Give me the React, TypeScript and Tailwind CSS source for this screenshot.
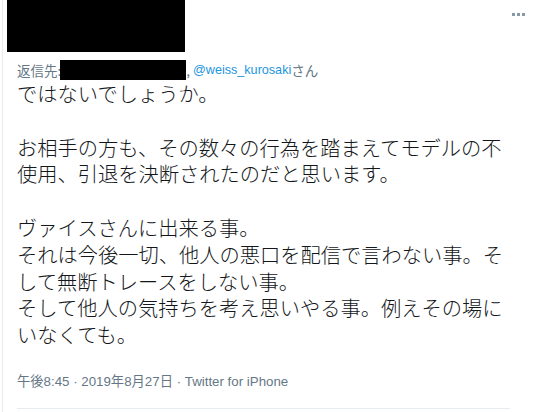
import React from 'react'

const jp = '"Noto Sans CJK JP", "Noto Sans", sans-serif'
const ui = '"Liberation Sans", "Noto Sans CJK JP", sans-serif'

export default function App() {
  return (
    <div className="w-[541px] h-[412px] bg-white overflow-hidden">
      <div className="ml-[2px] h-full border-l border-[#e6ecf0] relative" style={{ fontFamily: ui }}>
        {/* more menu */}
        <div className="absolute right-[16px] top-[13px] flex gap-[2px]">
          <span className="w-[3px] h-[3px] bg-[#8899a6]" />
          <span className="w-[3px] h-[3px] bg-[#8899a6]" />
          <span className="w-[3px] h-[3px] bg-[#8899a6]" />
        </div>

        {/* redacted name block */}
        <div className="ml-[4px] w-[178px] h-[52px] bg-black" />

        {/* reply to */}
        <div className="mt-[8px] ml-[14px] flex items-center h-[20px] text-[13.5px] text-[#657786]" style={{ fontFamily: jp }}>
          <span>返信先:</span>
          <span className="w-[126px] h-[20px] bg-black -ml-[1px]" />
          <span>,&nbsp;</span>
          <span className="text-[#1b95e0] text-[12.6px]" style={{ fontFamily: ui }}>@weiss_kurosaki</span>
          <span>さん</span>
        </div>

        {/* tweet text */}
        <div
          className="ml-[14px] mt-[1px] text-[20.25px] leading-[26.8px] font-light text-[#14171a] whitespace-pre-wrap"
          style={{ fontFamily: jp }}
        >
          {`ではないでしょうか。

お相手の方も、その数々の行為を踏まえてモデルの不
使用、引退を決断されたのだと思います。

ヴァイスさんに出来る事。
それは今後一切、他人の悪口を配信で言わない事。そ
して無断トレースをしない事。
そして他人の気持ちを考え思いやる事。例えその場に
いなくても。`}
        </div>

        {/* meta */}
        <div className="ml-[14px] mt-[23px] text-[13.3px] text-[#657786]">
          午後8:45 · 2019年8月27日 · Twitter for iPhone
        </div>

        <div className="ml-[14px] mr-[31px] mt-[16px] border-b border-[#e6ecf0]" />
      </div>
    </div>
  )
}
